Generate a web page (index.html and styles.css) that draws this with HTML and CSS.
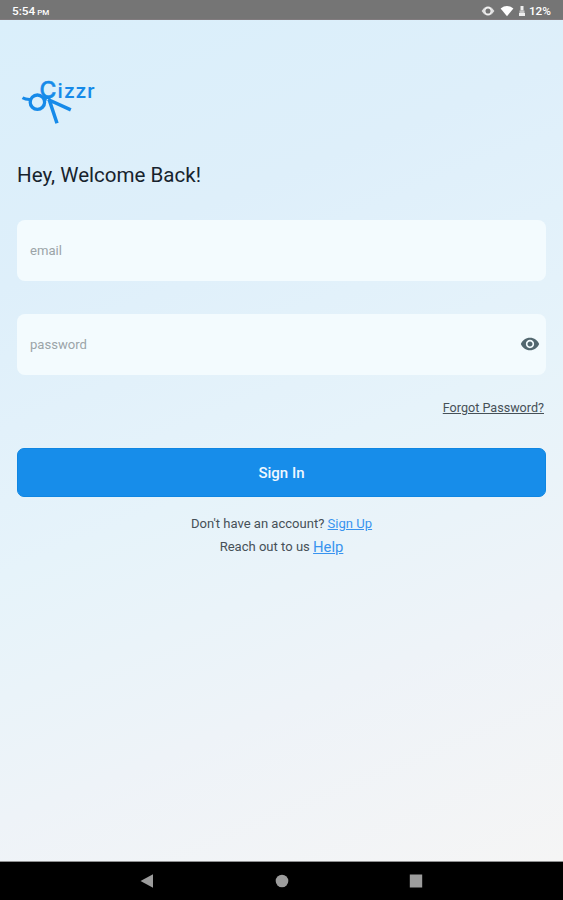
FILE: index.html
```html
<!DOCTYPE html>
<html lang="en">
<head>
<meta charset="utf-8">
<title>Cizzr</title>
<link rel="stylesheet" href="styles.css">
</head>
<body>
<header class="status">
  <div class="clock">5:54<span class="meridiem">PM</span></div>
  <div class="indicators">
    <svg width="14" height="12" viewBox="0 0 14 12"><circle cx="7" cy="6" r="3.5" fill="none" stroke="#f2f2f2" stroke-width="1.9"/><path d="M3.6 2.2L.6 6l3 3.8zM10.4 2.2l3 3.8-3 3.8z" fill="#dedede"/></svg>
    <svg class="wifi" width="14" height="12" viewBox="0 0 14 12"><path d="M.6 3.4Q7-1.3 13.4 3.4L7 11.2Z" fill="#fff"/></svg>
    <svg class="battery" width="8" height="12" viewBox="0 0 8 12"><path d="M2.5 1h3v4.5h-3zM1 8h6v3H1z" fill="#eee"/><path d="M1.5 5.5h5V8h-5z" fill="#c4c4c4"/></svg>
    <span>12%</span>
  </div>
</header>
<main class="screen">
  <svg class="logo" width="76" height="56" viewBox="21 69 76 56">
    <g fill="none" stroke="#168ae9">
      <circle cx="37.4" cy="102.2" r="7.2" stroke-width="3.3"/>
      <path d="M22.5 97.8Q25.5 99.7 30.5 99.5" stroke-width="3"/>
      <path d="M43.5 98L49 99.3L57 123.3M48 99.5L70.8 109.8" stroke-width="3.5"/>
    </g>
    <circle cx="47.4" cy="99.8" r=".8" fill="#dcf0fb"/>
    <text class="logo-initial" x="39.6" y="98">C</text>
    <text class="logo-word" x="57.6" y="97.6" textLength="37">izzr</text>
  </svg>
  <h1 class="title">Hey, Welcome Back!</h1>
  <form class="form">
    <div class="field">email</div>
    <div class="field">password
      <svg class="eye" width="20" height="20" viewBox="0 0 24 24"><path fill="#52676f" d="M12 4.5C7 4.5 2.73 7.61 1 12c1.73 4.39 6 7.5 11 7.5s9.27-3.11 11-7.5c-1.73-4.39-6-7.5-11-7.5zM12 17c-2.76 0-5-2.24-5-5s2.24-5 5-5 5 2.24 5 5-2.24 5-5 5zm0-8c-1.66 0-3 1.34-3 3s1.34 3 3 3 3-1.34 3-3-1.34-3-3-3z"/></svg>
    </div>
    <a class="forgot">Forgot Password?</a>
    <div class="submit">Sign In</div>
  </form>
  <p class="note">Don't have an account? <a class="link">Sign Up</a></p>
  <p class="note">Reach out to us <a class="link help">Help</a></p>
</main>
<nav class="navbar">
  <svg width="14" height="14" viewBox="0 0 14 14"><path d="M.5 7L13 .3v13.4z" fill="#9c9c9c"/></svg>
  <svg width="14" height="14" viewBox="0 0 14 14"><circle cx="7" cy="7" r="6.3" fill="#9c9c9c"/></svg>
  <svg width="14" height="14" viewBox="0 0 14 14"><path d="M.8.5h12.4v13H.8z" fill="#9c9c9c"/></svg>
</nav>
</body>
</html>
```
FILE: styles.css
```css
* { box-sizing: border-box; }
body {
  margin: 0;
  height: 900px;
  display: flex;
  flex-direction: column;
  overflow: hidden;
  font-family: Roboto, "Liberation Sans", sans-serif;
  color: #465057;
}
svg { display: block; flex: none; overflow: visible; }
.status {
  height: 20px;
  flex: none;
  display: flex;
  justify-content: space-between;
  align-items: center;
  padding: 2px 12px 0;
  background: #757575;
  border-bottom: 1px solid #817b7e;
  color: #fff;
  font-size: 11.8px;
  font-weight: 500;
}
.meridiem { font-size: 8px; margin-left: 2px; }
.indicators { display: flex; align-items: center; }
.wifi { margin-left: 5px; }
.battery { margin: 0 3px 0 4px; }
.screen {
  flex: 1;
  padding: 49px 17px 0;
  background: linear-gradient(158deg, #daeffb 0%, #deeffa 25%, #e6f3fa 52%, #eef3f8 75%, #f5f5f5 100%);
}
.logo { margin-left: 4px; }
.logo text { font-weight: 500; fill: #168ae9; }
.logo-initial { font-family: Inter, Roboto, sans-serif; font-size: 23px; stroke: #168ae9; stroke-width: .5px; }
.logo-word { font-size: 20.5px; }
.title {
  margin: 37px 0 0;
  font-size: 20.55px;
  line-height: 26px;
  font-weight: 400;
  color: #17232d;
}
.form { display: flex; flex-direction: column; margin-top: 32px; }
.field {
  height: 61px;
  margin-bottom: 33px;
  padding: 0 6px 0 13px;
  display: flex;
  align-items: center;
  justify-content: space-between;
  border-radius: 8px;
  background: #f3fbfe;
  color: #9ba4a8;
  font-size: 13.1px;
}
.eye { margin-top: -2px; }
.forgot {
  align-self: flex-end;
  margin: -8px 2px 0 0;
  font-size: 12.6px;
  line-height: 16px;
  text-decoration: underline;
}
.submit {
  height: 49px;
  margin: 32px 0 16px;
  border-radius: 7px;
  border: 1px solid #0f86e2;
  background: #178dea;
  color: #eff8ff;
  font-size: 15px;
  font-weight: 500;
  line-height: 49px;
  text-align: center;
}
.note {
  margin: 0;
  text-align: center;
  font-size: 13.05px;
  line-height: 22px;
}
.link { color: #3893ef; text-decoration: underline; }
.help { font-size: 14.8px; position: relative; top: 1px; }
.navbar {
  height: 39px;
  flex: none;
  display: flex;
  justify-content: space-between;
  align-items: center;
  padding: 0 140px;
  background: #000;
  border-top: 1px solid #8f9091;
}
```
